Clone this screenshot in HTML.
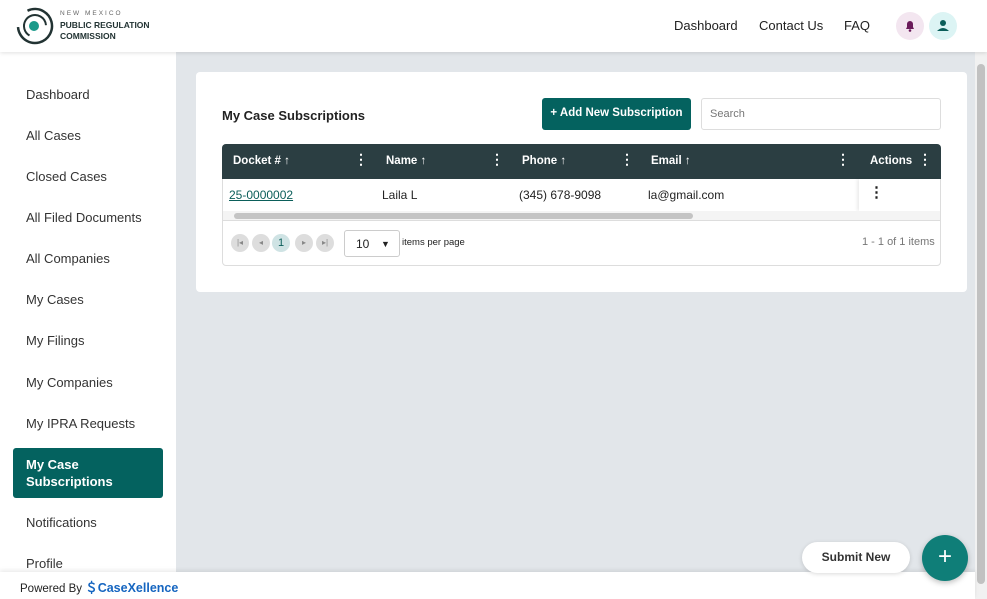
<!DOCTYPE html>
<html><head><meta charset="utf-8"><style>
*{box-sizing:border-box;margin:0;padding:0}
body{width:987px;height:599px;overflow:hidden;font-family:"Liberation Sans",sans-serif;background:#e2e6ea;position:relative;color:#222}
.top{position:absolute;left:0;top:0;width:987px;height:52px;background:#fff;box-shadow:0 1px 4px rgba(0,0,0,.12);z-index:3}
.nav{position:absolute;top:18px;font-size:13px;color:#222}
.side{position:absolute;left:0;top:52px;width:176px;height:547px;background:#fff}
.si{position:absolute;left:26px;font-size:13px;color:#333}
.act{position:absolute;left:13px;top:448px;width:150px;height:50px;background:#04625f;border-radius:3px;color:#fff;font-weight:bold;font-size:13px;padding:8px 13px;line-height:17px}
.card{position:absolute;left:196px;top:72px;width:771px;height:220px;background:#fff;border-radius:4px}
.foot{position:absolute;left:0;top:572px;width:975px;height:27px;background:#fff;box-shadow:0 -2px 4px rgba(0,0,0,.08);z-index:2}
.th{position:absolute;top:155px;font-size:11.5px;font-weight:bold;color:#fff}
.dots{position:absolute;top:151px;color:#fff;font-size:14px;font-weight:bold}
.td{position:absolute;top:188px;font-size:12px;color:#222}
.pb{position:absolute;top:234px;width:18px;height:18px;border-radius:50%;background:#ddd;font-size:8px;color:#888;text-align:center;line-height:18px}
</style></head><body>
<div class="top">
<svg style="position:absolute;left:16px;top:6px" width="38" height="40" viewBox="0 0 38 40"><circle cx="19" cy="20" r="17" fill="none" stroke="#233" stroke-width="2.5" stroke-dasharray="70 20" transform="rotate(-60 19 20)"/><circle cx="19" cy="20" r="11" fill="none" stroke="#233" stroke-width="2" stroke-dasharray="45 25" transform="rotate(120 19 20)"/><circle cx="18" cy="20" r="5" fill="#1a9a8a"/></svg>
<div style="position:absolute;left:60px;top:10px;font-size:6.5px;letter-spacing:2px;color:#666">NEW MEXICO</div>
<div style="position:absolute;left:60px;top:20px;font-size:8.5px;font-weight:bold;color:#233;line-height:11px">PUBLIC REGULATION<br>COMMISSION</div>
<div class="nav" style="left:674px">Dashboard</div>
<div class="nav" style="left:759px">Contact Us</div>
<div class="nav" style="left:844px">FAQ</div>
<div style="position:absolute;left:896px;top:12px;width:28px;height:28px;border-radius:50%;background:#f3e6f0"><svg width="28" height="28"><path d="M10 17h8l-1-2v-3a3 3 0 0 0-6 0v3z" fill="#6a1b5a"/><circle cx="14" cy="18.5" r="1.3" fill="#6a1b5a"/></svg></div>
<div style="position:absolute;left:929px;top:12px;width:28px;height:28px;border-radius:50%;background:#dcf4f4"><svg width="28" height="28"><circle cx="14" cy="11" r="3" fill="#0b5e5a"/><path d="M8 19q6-6 12 0z" fill="#0b5e5a"/></svg></div>
</div>
<div class="side">
<div class="si" style="top:35px">Dashboard</div>
<div class="si" style="top:76px">All Cases</div>
<div class="si" style="top:117px">Closed Cases</div>
<div class="si" style="top:158px">All Filed Documents</div>
<div class="si" style="top:199px">All Companies</div>
<div class="si" style="top:240px">My Cases</div>
<div class="si" style="top:281px">My Filings</div>
<div class="si" style="top:323px">My Companies</div>
<div class="si" style="top:364px">My IPRA Requests</div>
<div class="si" style="top:463px">Notifications</div>
<div class="si" style="top:504px">Profile</div>
</div>
<div class="act">My Case<br>Subscriptions</div>
<div style="position:absolute;left:975px;top:52px;width:12px;height:547px;background:#f1f1f1"><div style="position:absolute;left:2px;top:12px;width:8px;height:520px;background:#c1c1c1;border-radius:4px"></div></div>
<div class="card"></div>
<div style="position:absolute;left:222px;top:108px;font-size:13px;font-weight:bold;color:#222">My Case Subscriptions</div>
<div style="position:absolute;left:542px;top:98px;width:149px;height:32px;background:#04625f;border-radius:3px;color:#fff;font-size:11.5px;font-weight:bold;text-align:center;line-height:30px">+ Add New Subscription</div>
<div style="position:absolute;left:701px;top:98px;width:240px;height:32px;border:1px solid #ddd;border-radius:3px;font-size:11px;color:#777;padding:9px 8px">Search</div>
<div style="position:absolute;left:222px;top:144px;width:719px;height:122px;border:1px solid #ddd;border-radius:4px"></div>
<div style="position:absolute;left:222px;top:144px;width:719px;height:35px;background:#2b3e42;border-radius:4px 4px 0 0"></div>
<div class="th" style="left:233px">Docket # <span style="font-weight:normal">↑</span></div>
<div class="th" style="left:386px">Name <span style="font-weight:normal">↑</span></div>
<div class="th" style="left:522px">Phone <span style="font-weight:normal">↑</span></div>
<div class="th" style="left:651px">Email <span style="font-weight:normal">↑</span></div>
<div class="th" style="left:870px">Actions</div>
<div class="dots" style="left:354px">⋮</div><div class="dots" style="left:490px">⋮</div><div class="dots" style="left:620px">⋮</div><div class="dots" style="left:836px">⋮</div><div class="dots" style="left:918px">⋮</div>
<div class="td" style="left:229px;color:#0b5e5a;text-decoration:underline">25-0000002</div>
<div class="td" style="left:382px">Laila L</div>
<div class="td" style="left:519px">(345) 678-9098</div>
<div class="td" style="left:648px">la@gmail.com</div>
<div style="position:absolute;left:859px;top:179px;width:81px;height:32px;background:#fff;box-shadow:-2px 0 3px rgba(0,0,0,.08)"></div>
<div class="td" style="left:869px;top:183px;font-size:15px;font-weight:bold">⋮</div>
<div style="position:absolute;left:223px;top:211px;width:717px;height:10px;background:#f4f4f4;border-bottom:1px solid #ddd"></div>
<div style="position:absolute;left:234px;top:213px;width:459px;height:6px;background:#c4c4c4;border-radius:3px"></div>
<div class="pb" style="left:231px">|◂</div><div class="pb" style="left:252px">◂</div>
<div class="pb" style="left:272px;background:#cfe3e4;color:#0b5e5a;font-size:11px">1</div>
<div class="pb" style="left:295px">▸</div><div class="pb" style="left:316px">▸|</div>
<div style="position:absolute;left:344px;top:230px;width:56px;height:27px;border:1px solid #ccc;border-radius:3px;font-size:12px;padding:6px 0 0 11px;white-space:nowrap">10<span style="font-size:9px;position:absolute;left:36px;top:8px">▼</span></div>
<div style="position:absolute;left:402px;top:237px;font-size:9.5px;color:#222">items per page</div>
<div style="position:absolute;left:862px;top:236px;font-size:11px;color:#777">1 - 1 of 1 items</div>
<div class="foot"><div style="position:absolute;left:20px;top:5px;font-size:11.5px;color:#222">Powered By <span style="color:#1565c0;font-weight:bold;font-size:12.5px">＄CaseXellence</span></div></div>
<div style="position:absolute;left:802px;top:542px;width:108px;height:31px;background:#fff;border-radius:16px;box-shadow:0 1px 4px rgba(0,0,0,.15);font-size:12px;font-weight:bold;color:#333;text-align:center;line-height:31px;z-index:4">Submit New</div>
<div style="position:absolute;left:922px;top:535px;width:46px;height:46px;border-radius:50%;background:#0f7e78;box-shadow:0 2px 6px rgba(0,0,0,.25);color:#fff;font-size:24px;text-align:center;line-height:44px;z-index:4">+</div>
</body></html>
